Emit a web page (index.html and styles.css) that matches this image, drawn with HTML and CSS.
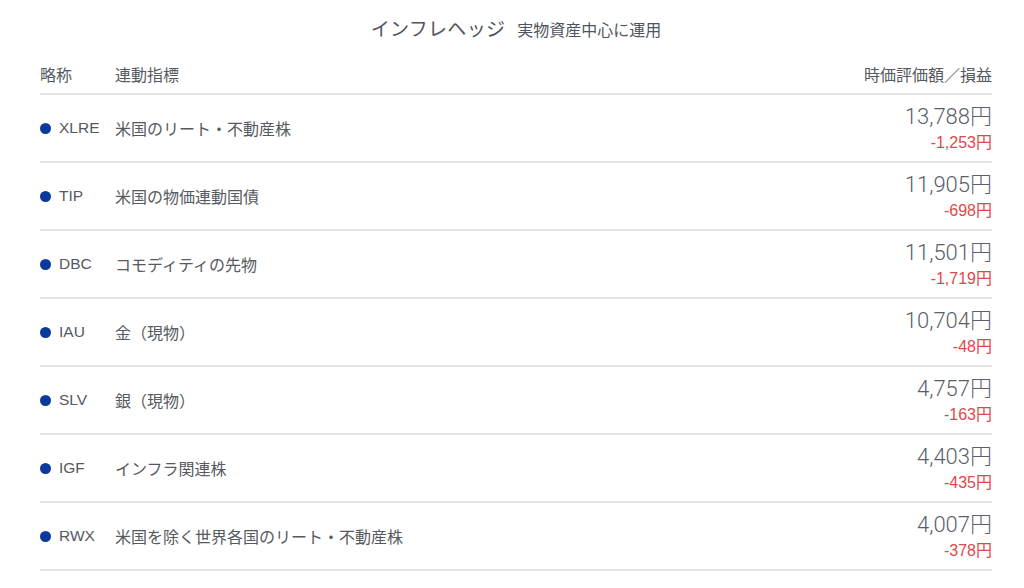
FILE: index.html
```html
<!DOCTYPE html>
<html lang="ja">
<head>
<meta charset="utf-8">
<title>インフレヘッジ</title>
<link rel="stylesheet" href="styles.css">
</head>
<body>
<div class="page">
  <h1 class="title"><span class="title-main">インフレヘッジ</span><span class="title-sub">実物資産中心に運用</span></h1>
  <div class="row head">
    <div class="c-tick">略称</div>
    <div class="c-name">連動指標</div>
    <div class="c-val">時価評価額／損益</div>
  </div>
  <div class="row">
    <div class="c-tick"><span class="dot"></span>XLRE</div>
    <div class="c-name">米国のリート・不動産株</div>
    <div class="c-val amount"><div class="val">13,788円</div><div class="pl">-1,253円</div></div>
  </div>
  <div class="row">
    <div class="c-tick"><span class="dot"></span>TIP</div>
    <div class="c-name">米国の物価連動国債</div>
    <div class="c-val amount"><div class="val">11,905円</div><div class="pl">-698円</div></div>
  </div>
  <div class="row">
    <div class="c-tick"><span class="dot"></span>DBC</div>
    <div class="c-name">コモディティの先物</div>
    <div class="c-val amount"><div class="val">11,501円</div><div class="pl">-1,719円</div></div>
  </div>
  <div class="row">
    <div class="c-tick"><span class="dot"></span>IAU</div>
    <div class="c-name">金（現物）</div>
    <div class="c-val amount"><div class="val">10,704円</div><div class="pl">-48円</div></div>
  </div>
  <div class="row">
    <div class="c-tick"><span class="dot"></span>SLV</div>
    <div class="c-name">銀（現物）</div>
    <div class="c-val amount"><div class="val">4,757円</div><div class="pl">-163円</div></div>
  </div>
  <div class="row">
    <div class="c-tick"><span class="dot"></span>IGF</div>
    <div class="c-name">インフラ関連株</div>
    <div class="c-val amount"><div class="val">4,403円</div><div class="pl">-435円</div></div>
  </div>
  <div class="row">
    <div class="c-tick"><span class="dot"></span>RWX</div>
    <div class="c-name">米国を除く世界各国のリート・不動産株</div>
    <div class="c-val amount"><div class="val">4,007円</div><div class="pl">-378円</div></div>
  </div>
</div>
</body>
</html>
```

FILE: styles.css
```css
html, body {
  margin: 0;
  padding: 0;
  background: #ffffff;
}
body {
  font-family: "Liberation Sans", "Noto Sans CJK JP", sans-serif;
  color: #555960;
}
.page {
  padding: 0 32px 0 40px;
}
.title {
  margin: 0;
  padding: 18px 0 6px;
  line-height: 24px;
  font-weight: normal;
  text-align: center;
  display: flex;
  justify-content: center;
  align-items: baseline;
  gap: 12px;
  color: #50545c;
}
.title-main {
  font-size: 19px;
  letter-spacing: 0.3px;
}
.title-sub {
  font-size: 16px;
}
.row {
  display: grid;
  grid-template-columns: 75px 1fr auto;
  align-items: center;
  height: 66px;
  border-bottom: 2px solid #e4e4e4;
  font-size: 16px;
}
.row.head {
  height: auto;
  padding: 15px 0 5px;
  line-height: 24px;
}
.c-tick {
  display: flex;
  align-items: center;
  font-size: 15.5px;
}
.head .c-tick {
  font-size: 16px;
}
.dot {
  width: 11px;
  height: 11px;
  border-radius: 50%;
  background: #0b3a9c;
  margin-right: 8px;
  flex: none;
}
.c-val {
  text-align: right;
}
.amount {
  padding-top: 2px;
}
.val {
  font-family: "Roboto", "Noto Sans CJK JP", sans-serif;
  font-weight: 300;
  font-size: 22px;
  line-height: 24px;
  color: #5a5f6b;
}
.pl {
  font-size: 16px;
  line-height: 20px;
  margin-top: 4px;
  color: #e0474c;
}
```
